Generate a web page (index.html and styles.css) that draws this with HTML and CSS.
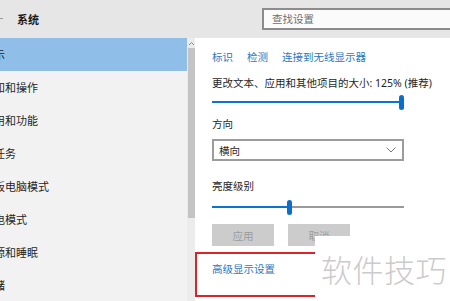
FILE: index.html
```html
<!DOCTYPE html>
<html lang="zh-CN">
<head>
    <meta charset="UTF-8">
    <title>系统</title>
    <link rel="stylesheet" href="styles.css">
</head>
<body>
    <div class="window">
        <div class="titlebar">
            <span class="back-mark"></span>
            <span class="title">系统</span>
            <div class="search">查找设置</div>
        </div>
        <div class="main">
            <ul class="nav">
                <li class="nav-item active">显示</li>
                <li class="nav-item">通知和操作</li>
                <li class="nav-item">应用和功能</li>
                <li class="nav-item">多任务</li>
                <li class="nav-item">平板电脑模式</li>
                <li class="nav-item">节电模式</li>
                <li class="nav-item">电源和睡眠</li>
                <li class="nav-item">存储</li>
            </ul>
            <div class="scrollbar">
                <svg class="scroll-arrow" width="7" height="5" viewBox="0 0 7 5">
                    <path d="M1 4 L3.5 1.5 L6 4" fill="none" stroke="#8a8a8a" stroke-width="1"/>
                </svg>
                <div class="scroll-thumb"></div>
            </div>
            <div class="content">
                <div class="links">
                    <a>标识</a>
                    <a>检测</a>
                    <a>连接到无线显示器</a>
                </div>
                <div class="label label-scale">更改文本、应用和其他项目的大小: 125% (推荐)</div>
                <div class="slider">
                    <div class="slider-fill full"></div>
                    <div class="slider-thumb"></div>
                </div>
                <div class="label label-orient">方向</div>
                <div class="dropdown">
                    <span>横向</span>
                    <svg width="10" height="6" viewBox="0 0 10 6">
                        <path d="M0.5 0.5 L5 5 L9.5 0.5" fill="none" stroke="#7a7a7a" stroke-width="1"/>
                    </svg>
                </div>
                <div class="label label-bright">亮度级别</div>
                <div class="slider">
                    <div class="slider-fill half"></div>
                    <div class="slider-thumb"></div>
                    <div class="slider-rest"></div>
                </div>
                <div class="buttons">
                    <button class="btn">应用</button>
                    <button class="btn">取消</button>
                </div>
                <div class="highlight">
                    <a>高级显示设置</a>
                </div>
            </div>
        </div>
        <div class="watermark">软件技巧</div>
    </div>
</body>
</html>
```

FILE: styles.css
```css
body {
    margin: 0;
    background: #ffffff;
    font-family: 'Noto Sans', 'Noto Sans CJK SC', sans-serif;
    font-size: 10.5px;
    color: #1f1f1f;
}

.window {
    position: relative;
    width: 450px;
    height: 301px;
    overflow: hidden;
    display: flex;
    flex-direction: column;
}

.titlebar {
    height: 38px;
    flex-shrink: 0;
    background: #e6e6e6;
    display: flex;
    align-items: center;
}

.back-mark {
    width: 3px;
    height: 1px;
    background: #9a9a9a;
    margin-top: -1px;
}

.title {
    margin-left: 14px;
    font-size: 11px;
    font-weight: 700;
    color: #1a1a1a;
}

.search {
    margin-left: auto;
    margin-right: -12px;
    width: 200px;
    height: 22px;
    box-sizing: border-box;
    border: 2px solid #8c8c8c;
    background: #fbfbfb;
    color: #6e6e6e;
    padding-left: 8px;
    line-height: 18px;
}

.main {
    flex: 1;
    display: flex;
}

.nav {
    list-style: none;
    margin: 0;
    padding: 0;
    width: 187px;
    flex-shrink: 0;
    background: #f2f2f2;
    overflow: hidden;
}

.nav-item {
    height: 33px;
    line-height: 33px;
    font-size: 11px;
    white-space: nowrap;
    text-indent: -17px;
    color: #1f1f1f;
}

.nav-item.active {
    background: #8fbfe8;
}

.scrollbar {
    width: 8px;
    flex-shrink: 0;
    background: #ececec;
    display: flex;
    flex-direction: column;
    align-items: center;
}

.scroll-arrow {
    margin-top: 3px;
    margin-bottom: 2px;
}

.scroll-thumb {
    width: 7px;
    height: 170px;
    background: #c4c4c4;
}

.content {
    flex: 1;
    padding-left: 17px;
    display: flex;
    flex-direction: column;
    align-items: flex-start;
}

.links {
    margin-top: 12px;
    line-height: 14px;
    display: flex;
    gap: 14px;
}

.links a,
.highlight a {
    color: #2a78c2;
}

.label {
    line-height: 14px;
}

.label-scale { margin-top: 12px; }
.label-orient { margin-top: 7px; }
.label-bright { margin-top: 18px; }

.slider {
    width: 192px;
    height: 16px;
    display: flex;
    align-items: center;
    margin-top: 4px;
}

.slider + .label { margin-top: 7px; }

.slider-fill {
    height: 2px;
    background: #0a74cf;
}

.slider-fill.full { width: 187px; }
.slider-fill.half { width: 75px; }

.slider-thumb {
    width: 5px;
    height: 15px;
    border-radius: 3px;
    background: #0a6fc8;
}

.slider-rest {
    flex: 1;
    height: 2px;
    background: #9a9a9a;
}

.dropdown {
    margin-top: 8px;
    width: 192px;
    height: 22px;
    box-sizing: border-box;
    border: 2px solid #9c9c9c;
    padding: 0 6px 0 5px;
    display: flex;
    align-items: center;
    justify-content: space-between;
}

.label-bright + .slider { margin-top: 6px; }

.buttons {
    margin-top: 9px;
    display: flex;
    gap: 14px;
}

.btn {
    width: 62px;
    height: 22px;
    border: none;
    padding: 0;
    background: #cccccc;
    color: #9c9c9c;
    font-family: inherit;
    font-size: 10.5px;
}

.highlight {
    margin-top: 6px;
    margin-left: -17px;
    width: 160px;
    height: 45px;
    box-sizing: border-box;
    border: 2px solid #d8252b;
    padding: 8px 0 0 15px;
    line-height: 14px;
}

.watermark {
    position: absolute;
    left: 315px;
    top: 236px;
    right: 0;
    bottom: 0;
    background: #ffffff;
    color: #cbcbcb;
    font-size: 31px;
    line-height: 31px;
    padding: 17px 0 0 6px;
    font-family: 'Noto Sans CJK SC', sans-serif;
    font-weight: 300;
    letter-spacing: 0.5px;
}
```
